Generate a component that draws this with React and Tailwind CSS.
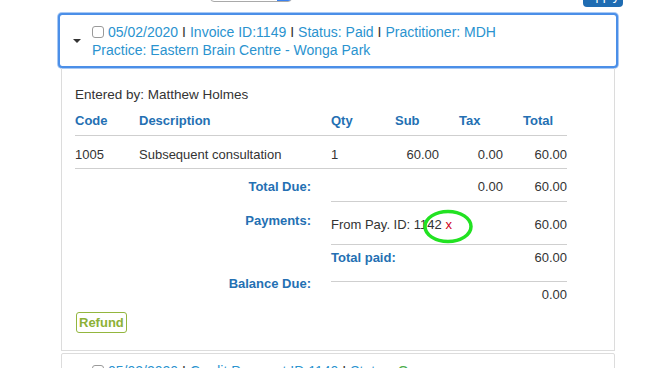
import React from 'react';

const linkCls = 'text-[#2a93cf]';
const sepCls = 'text-[#333] mx-[4px]';

const Checkbox = () => (
  <span className="inline-block align-[-1px] w-[12px] h-[12px] rounded-[3px] border border-[#9a9a9a] bg-white mr-[4px]" />
);

const Caret = () => (
  <svg width="8" height="4" viewBox="0 0 8 4" className="block">
    <path d="M0 0 L8 0 L4 4 Z" fill="#333" />
  </svg>
);

const lines = [
  { code: '1005', desc: 'Subsequent consultation', qty: '1', sub: '60.00', tax: '0.00', total: '60.00' },
];

const App = () => {
  return (
    <div className="w-[654px] h-[368px] overflow-hidden bg-white font-['Liberation_Sans',Arial,sans-serif] text-[#333]">
      {/* top toolbar, mostly scrolled out of view */}
      <div className="flex items-start h-[15px]">
        <div className="ml-[210px] mt-[-18px] w-[82px] h-[20px] flex rounded-[4px] border border-[#a9a9a9] bg-white overflow-hidden">
          <div className="flex-1" />
          <div className="w-[14px] bg-[#3b82f0]" />
        </div>
        <button
          type="button"
          className="ml-auto mr-[31px] mt-[-15px] w-[40px] h-[22px] rounded-[4px] bg-[#1f6cb2] text-white text-[13px] leading-[22px] text-center"
        >
          Apply
        </button>
      </div>

      {/* invoice panel */}
      <div className="ml-[60px] w-[556px]">
        <div className="flex h-[51px] bg-white outline-2 outline-[#4b8fe8] rounded-[2px] shadow-[0_0_0_3px_#a9c9f4]">
          <div className="w-[32px] flex items-center justify-center pl-[1px]">
            <Caret />
          </div>
          <div className="pt-[8px] text-[14px] leading-[18px]">
            <Checkbox />
            <span className={linkCls}>05/02/2020</span>
            <span className={sepCls}>I</span>
            <span className={linkCls}>Invoice ID:1149</span>
            <span className={sepCls}>I</span>
            <span className={linkCls}>Status: Paid</span>
            <span className={sepCls}>I</span>
            <span className={linkCls}>Practitioner: MDH</span>
            <br />
            <span className={linkCls}>Practice: Eastern Brain Centre - Wonga Park</span>
          </div>
        </div>

        <div className="mx-[1px] border-l border-r border-b border-[#dcdcdc] pt-[21px] pb-[16px] pl-[13px]">
          <p className="text-[13.5px] leading-[16px]">Entered by: Matthew Holmes</p>

          <div className="mt-[2px] w-[492px] text-[13px] leading-[16px]">
            <div className="grid grid-cols-[64px_192px_64px_64px_64px_44px] h-[31px] pt-[8px] border-b border-[#cfcfcf] font-bold text-[#2470b3]">
              <span>Code</span>
              <span>Description</span>
              <span>Qty</span>
              <span>Sub</span>
              <span>Tax</span>
              <span>Total</span>
            </div>
            {lines.map((line) => (
              <div key={line.code} className="grid grid-cols-[64px_192px_64px_64px_64px_44px] h-[33px] pt-[11px] border-b border-[#cfcfcf]">
                <span>{line.code}</span>
                <span>{line.desc}</span>
                <span>{line.qty}</span>
                <span className="text-right pr-5">{line.sub}</span>
                <span className="text-right pr-5">{line.tax}</span>
                <span className="text-right">{line.total}</span>
              </div>
            ))}

            <div className="grid grid-cols-[256px_236px]">
              <div className="pt-[10px] pr-5 text-right font-bold text-[#2470b3]">
                <p>Total Due:</p>
                <p className="mt-[18px]">Payments:</p>
                <p className="mt-[47px]">Balance Due:</p>
              </div>
              <div>
                <div className="grid grid-cols-[64px_64px_64px_44px] h-[33px] pt-[10px] border-b border-[#cfcfcf]">
                  <span />
                  <span />
                  <span className="text-right pr-5">0.00</span>
                  <span className="text-right">60.00</span>
                </div>
                <div className="relative flex justify-between h-[43px] pt-[15px] border-b border-[#cfcfcf]">
                  <span>
                    From Pay. ID: 1142 <span className="text-[#d0021b]">x</span>
                  </span>
                  <span>60.00</span>
                  <svg width="50" height="35" viewBox="0 0 50 35" className="absolute left-[92px] top-[7px]">
                    <ellipse cx="25" cy="17.5" rx="23" ry="15" fill="none" stroke="#22e222" strokeWidth="3.5" />
                  </svg>
                </div>
                <div className="flex justify-between h-[37px] pt-[5px] border-b border-[#cfcfcf]">
                  <span className="font-bold text-[#2470b3]">Total paid:</span>
                  <span>60.00</span>
                </div>
                <div className="h-[24px] pt-[5px] text-right">0.00</div>
              </div>
            </div>
          </div>

          <button
            type="button"
            className="mt-[6px] ml-[1px] h-[21px] px-[2px] rounded-[3px] border border-[#93b63e] bg-white text-[13px] font-bold text-[#8cb136] leading-[19px]"
          >
            Refund
          </button>
        </div>
      </div>

      {/* next panel */}
      <div className="ml-[61px] mt-[2px] w-[554px] h-[40px] border border-[#dcdcdc] rounded-[2px]">
        <div className="pl-[30px] pt-[8px] text-[14px] leading-[18px]">
          <Checkbox />
          <span className={linkCls}>05/02/2020</span>
          <span className={sepCls}>I</span>
          <span className={linkCls}>Credit Payment ID:1140</span>
          <span className={sepCls}>I</span>
          <span className={linkCls}>Status: </span>
          <span className="text-[#4cae4c]">Open</span>
        </div>
      </div>
    </div>
  );
};

export default App;
